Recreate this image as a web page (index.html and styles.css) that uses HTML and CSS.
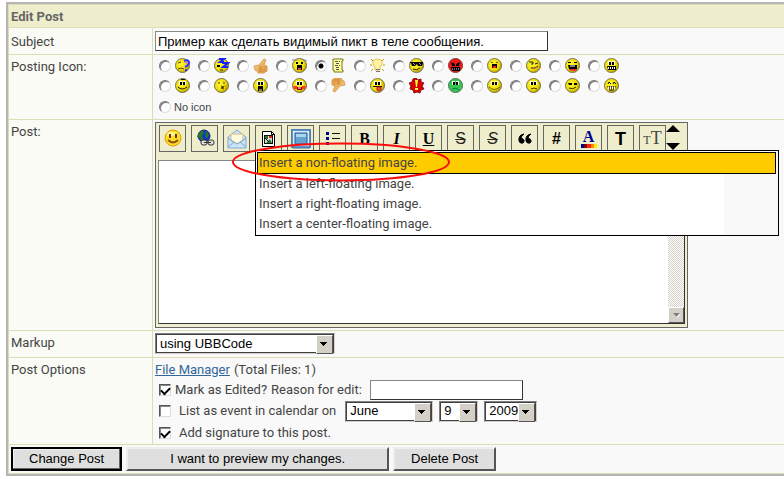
FILE: index.html
```html
<!DOCTYPE html>
<html lang="en">
<head>
<meta charset="utf-8">
<title>Edit Post</title>
<link rel="stylesheet" href="styles.css">
</head>
<body>
<svg class="defs" aria-hidden="true">
  <defs>
    <radialGradient id="yellow" cx=".4" cy=".4" r=".65"><stop offset="0" stop-color="#fff83c"/><stop offset=".65" stop-color="#eedc00"/><stop offset="1" stop-color="#a89300"/></radialGradient>
    <linearGradient id="hand" x2="1" y2="1"><stop offset="0" stop-color="#ffdc90"/><stop offset="1" stop-color="#d98b32"/></linearGradient>
    <g id="face"><circle cx="7.5" cy="7.5" r="7" fill="url(#yellow)" stroke="#777250"/></g>
    <g id="eyes"><path d="M4 3h3v4H4zM8 3h3v4H8z" fill="#fff"/><path d="M5 4h2v3H5zM8 4h2v3H8z"/></g>
    <g id="thumb"><path d="M1 8l5-1 5-6 2 1-2 5 3 1v5l-3 2H5l-1-2-2-1z" fill="url(#hand)" stroke="#d9a45f"/><path d="M6 9h3M6 11h3M6 13h3" stroke="#c98238" fill="none"/></g>
  </defs>
</svg>
<form class="post-form">
  <h1 class="title">Edit Post</h1>

  <div class="row middle">
    <label class="name" for="subject">Subject</label>
    <div class="value"><input class="field subject" id="subject" type="text" value="Пример как сделать видимый пикт в теле сообщения."></div>
  </div>

  <div class="row">
    <div class="name">Posting Icon:</div>
    <div class="value icon-cell">
      <div class="icons">
        <label><input type="radio" name="icon" aria-label="Confused"><svg><use href="#face"/><path d="M3 5l3-1M3 11l3-1 3 1" stroke="#554600" fill="none"/><path d="M9 3q4-2 5 1 0 3-4 5m0 3h2" stroke="#33f" stroke-width="2" fill="none"/><path d="M9 4l4 1" stroke="#c6f"/></svg></label>
        <label><input type="radio" name="icon" aria-label="Sleepy"><svg><use href="#face"/><path d="M5 1h5L6 4h4M8 5h6l-5 4h5" stroke="#12f" stroke-width="2" fill="none"/><path d="M3 7h3v2H3z"/><path d="M6 12h3" stroke="#222"/></svg></label>
        <label><input type="radio" name="icon" aria-label="Thumbs up"><svg><use href="#thumb"/></svg></label>
        <label><input type="radio" name="icon" aria-label="Shocked"><svg><use href="#face"/><path d="M0 2h5M10 1l5 2" stroke="#7788a0"/><path d="M4 4h2v2H4zM9 4h2v2H9zM5 7h5v5H5z"/><path d="M6 10h3v2H6z" fill="#d44"/></svg></label>
        <label><input type="radio" name="icon" aria-label="Note" checked><svg><path d="M2 1h10v2h-1v9h1v2H3v-2H2z" fill="#ffffa0" stroke="#777b13"/><path d="M4 3.500h5M5 5.500h4M4 7.500h5M5 9.500h4M5 11.500h4" stroke="#555" stroke-dasharray="3 1"/></svg></label>
        <label><input type="radio" name="icon" aria-label="Idea"><svg><path d="M1 1l2 2m11-2l-2 2M0 7h2m11 0h2M1 13l2-2m11 2l-2-2" stroke="#b9a100"/><path d="M5 9Q2 6 3 3q4-4 9 0 1 3-2 6v3H5z" fill="#fff5a0" stroke="#e8bd4b"/><path d="M6 11.500h4M6 13.500h4" stroke="#777"/></svg></label>
        <label><input type="radio" name="icon" aria-label="Cool"><svg><use href="#face"/><path d="M1 4h13v1l-1 3H9L8 6 6 8H3L2 5H1z"/><path d="M4 5l2 2m4-2l2 2" stroke="#999"/><path d="M4 11q4 2 7-1" stroke="#222" fill="none"/></svg></label>
        <label><input type="radio" name="icon" aria-label="Mad"><svg><circle cx="7.5" cy="7.5" r="7" fill="#ef1715" stroke="#8b3838"/><path d="M3 4l4 2v2H4zM12 4L8 6v2h3zM3 9h9v4H4z"/><path d="M4 11h8" stroke="#ddd" stroke-dasharray="1 1"/></svg></label>
        <label><input type="radio" name="icon" aria-label="Surprised"><svg><use href="#face"/><path d="M4 4.500h2M9 4.500h2" stroke="#665b00"/><path d="M5 6h5v4H5z"/><path d="M6 8h3v2H6z" fill="#e22"/></svg></label>
        <label><input type="radio" name="icon" aria-label="Wink"><svg><use href="#face"/><path d="M3 4h4v2H5M9 6l3-1M5 10h4l3-2" stroke="#222" fill="none"/><path d="M8 11l4-2" stroke="#f66"/></svg></label>
        <label><input type="radio" name="icon" aria-label="Laugh"><svg><use href="#face"/><path d="M3 4h3v1H3zM9 4h3v1H9zM3 7h9v4q-4 4-8 0z"/><path d="M5 8h5" stroke="#fff"/><path d="M5 11h6v2H6z" fill="#f33"/></svg></label>
        <label><input type="radio" name="icon" aria-label="Grin"><svg><use href="#face"/><use href="#eyes"/><path d="M3 8h9v4H4z"/><path d="M4 10h8" stroke="#fff" stroke-width="2" stroke-dasharray="1 1"/></svg></label>
        <label><input type="radio" name="icon" aria-label="Crazy"><svg><use href="#face"/><use href="#eyes"/><path d="M3 9q4 4 9 0M6 1.500h4" stroke="#111" fill="none"/></svg></label>
        <label><input type="radio" name="icon" aria-label="Kiss"><svg><use href="#face"/><path d="M4 5h2M9 5h2M7 8l3 1-3 1 3 1" stroke="#513c00" fill="none"/><path d="M10 8h4v2h-3" fill="#ffd900" stroke="#b58b00"/></svg></label>
        <label><input type="radio" name="icon" aria-label="Gasp"><svg><use href="#face"/><use href="#eyes"/><path d="M5 8h5v5H5z"/><path d="M6 11h3v2H6z" fill="#777"/></svg></label>
        <label><input type="radio" name="icon" aria-label="Blush"><svg><use href="#face"/><use href="#eyes"/><path d="M1 8h4v3H2zM10 8h4l-1 3h-3z" fill="#ff3c22"/><path d="M5 9h5v3H5z" fill="#900"/><path d="M6 10h3" stroke="#fff"/></svg></label>
        <label><input type="radio" name="icon" aria-label="Thumbs down"><svg><use href="#thumb" transform="matrix(-1 0 0 -1 15 15)"/></svg></label>
        <label><input type="radio" name="icon" aria-label="Tongue"><svg><use href="#face"/><use href="#eyes"/><path d="M3 8.500h9" stroke="#111"/><path d="M7 9h4v3q-2 2-4 0z" fill="#f44" stroke="#a22"/></svg></label>
        <label><input type="radio" name="icon" aria-label="Exclamation"><svg><path d="M7 0l2 2 3-1v3l3 1-2 3 2 3-3 1-1 3-3-1-3 1-1-3-3-1 1-3-2-3 3-1 1-3z" fill="#d90000" stroke="#8d1717"/><path d="M6 2h3l-1 7H7zM6 10h3v2H6z" fill="#ff3"/></svg></label>
        <label><input type="radio" name="icon" aria-label="Sick"><svg><circle cx="7.5" cy="7.5" r="7" fill="#36c653" stroke="#507259"/><use href="#eyes"/><path d="M4 11q4-2 7 1" stroke="#074" fill="none"/></svg></label>
        <label><input type="radio" name="icon" aria-label="Pleased"><svg><use href="#face"/><use href="#eyes"/><path d="M2 9q5 5 11 0" stroke="#6e5d00" fill="none"/></svg></label>
        <label><input type="radio" name="icon" aria-label="Sad"><svg><use href="#face"/><use href="#eyes"/><path d="M5 11q3-2 6 0" stroke="#4c3b00" fill="none"/></svg></label>
        <label><input type="radio" name="icon" aria-label="Smirk"><svg><use href="#face"/><path d="M3 5h4v2H4zM9 5h3v2H9z"/><path d="M4 10q4 2 7-1" stroke="#332d00" fill="none"/></svg></label>
        <label><input type="radio" name="icon" aria-label="Smile"><svg><use href="#face"/><path d="M4 6l1-2 2 2m2 0l1-2 2 2" stroke="#111" fill="none"/><path d="M3 8h9l-1 3-2 2H6l-2-2z" fill="#594b00"/><path d="M4 10h7" stroke="#fff" stroke-width="3" stroke-dasharray="1 1"/></svg></label>
      </div>
      <label class="no-icon"><input type="radio" name="icon">No icon</label>
    </div>
  </div>

  <div class="row">
    <label class="name" for="body">Post:</label>
    <div class="value">
      <div class="editor">
        <div class="toolbar">
          <button type="button" aria-label="Smileys"><svg viewBox="0 0 20 20"><circle cx="10" cy="9" r="8" fill="#ffdf26" stroke="#e39b10"/><ellipse cx="8" cy="5" rx="4" ry="2" fill="#fff59c"/><path d="M6 5h2v4H6zM12 5h2v4h-2z" fill="#68320c"/><path d="M5 11q5 5 10 0" stroke="#94520c" fill="none" stroke-width="2"/></svg></button>
          <button type="button" aria-label="Link"><svg viewBox="0 0 20 20"><circle cx="9" cy="7" r="6" fill="#1730ce" stroke="#17285d"/><path d="M4 4l4-3 1 3-2 3 2 4-2 2-2-4-3-1zM11 2l3 3-2 5-2-3z" fill="#237929"/><rect x="6" y="11" width="6" height="5" rx="2" fill="#ddd" stroke="#333"/><rect x="13" y="11" width="6" height="5" rx="2" fill="#ddd" stroke="#333"/><path d="M9 13.500h7" stroke="#333"/></svg></button>
          <button type="button" aria-label="E-mail"><svg viewBox="0 0 20 20"><path d="M1 8l9-7 9 7v11H1z" fill="#cce4fa" stroke="#82a8d3"/><path d="M4 5h12v7l-6 3-6-3z" fill="#fff9dd" stroke="#d7bd83"/><path d="M1 9l9 6 9-6M1 18l6-5m12 5l-6-5" fill="none" stroke="#78a5d5"/></svg></button>
          <button type="button" aria-label="Image" aria-expanded="true"><svg viewBox="0 0 20 20"><path d="M3.500 2.500h9l3 3v12h-12z" fill="#fff" stroke="#000"/><path d="M12.500 2.500v3h3" fill="none" stroke="#000"/><rect x="5.500" y="6.500" width="8" height="8" fill="#ddd" stroke="#111"/><path d="M6 7h3v3H6zM7 14l4-4 2 4z" fill="#208028"/><path d="M10 7h3v2h-3z" fill="#d22"/><path d="M6 9l4 4" stroke="#111"/></svg></button>
          <button type="button" aria-label="Media"><svg viewBox="0 0 20 20"><rect x="0" y="0" width="20" height="19" rx="2" fill="#5f94c8" stroke="#426d9b"/><path d="M2 2h16v15H2z" fill="#d7ecfa"/><path d="M4 4h12v11H4z" fill="#66a3d2" stroke="#315f90"/><path d="M5 5h10v3H5z" fill="#a9d5ee"/></svg></button>
          <button type="button" aria-label="List"><svg viewBox="0 0 20 20"><path d="M3 3h3v3H3zM3 8h3v3H3zM3 13h3v3H3z" fill="#00008b"/><path d="M9 4.500h8M9 9.500h8M9 14.500h8" stroke="#111"/></svg></button>
          <button type="button" class="serif">B</button>
          <button type="button" class="serif italic">I</button>
          <button type="button" class="serif underline">U</button>
          <button type="button" class="strike">S</button>
          <button type="button" class="strike italic">S</button>
          <button type="button" aria-label="Quote"><svg viewBox="0 0 20 20"><path d="M9 5Q3 6 4 12q1 3 4 2 3-3-2-5 0-2 3-4zM16 5q-6 1-5 7 1 3 4 2 3-3-2-5 0-2 3-4z" stroke="#000"/></svg></button>
          <button type="button" class="hash">#</button>
          <button type="button" aria-label="Font color" class="color">A</button>
          <button type="button" class="font">T</button>
          <button type="button" class="size" aria-label="Font size"><small>T</small>T</button>
          <span class="resize"><button type="button" aria-label="Shrink editor"><svg viewBox="0 0 14 8"><path d="M7 0l7 7H0z"/></svg></button><button type="button" aria-label="Enlarge editor"><svg viewBox="0 0 14 8"><path d="M7 8L0 1h14z"/></svg></button></span>
        </div>
        <div class="text-box">
          <textarea id="body"></textarea>
          <div class="scroll"><button type="button" class="arrow" aria-label="Scroll down"><svg viewBox="0 0 9 6"><path d="M2 2h7L5 6z" fill="#fff"/><path d="M1 1h7L4.500 5z" fill="#808080"/></svg></button></div>
        </div>
        <div class="menu">
          <button type="button" class="current">Insert a non-floating image.</button>
          <div class="rest">
            <button type="button">Insert a left-floating image.</button>
            <button type="button">Insert a right-floating image.</button>
            <button type="button">Insert a center-floating image.</button>
          </div>
        </div>
        <svg class="ring" viewBox="0 0 220 40"><ellipse cx="110" cy="20" rx="108" ry="18.500" fill="none" stroke="#f80c0c" stroke-width="2"/></svg>
      </div>
    </div>
  </div>

  <div class="row">
    <label class="name" for="markup">Markup</label>
    <div class="value"><span class="select markup"><select id="markup"><option>using UBBCode</option></select></span></div>
  </div>

  <div class="row">
    <div class="name">Post Options</div>
    <div class="value options">
      <div class="line"><a href="#files">File Manager</a> (Total Files: 1)</div>
      <div class="line"><input type="checkbox" id="edited" checked><label for="edited">Mark as Edited?</label> <label for="reason">Reason for edit:</label><input class="field reason" id="reason" type="text"></div>
      <div class="line wide"><input type="checkbox" id="event"><label for="event">List as event in calendar on</label>
        <span class="select month"><select aria-label="Month"><option>June</option></select></span>
        <span class="select day"><select aria-label="Day"><option>9</option></select></span>
        <span class="select year"><select aria-label="Year"><option>2009</option></select></span>
      </div>
      <div class="line wide"><input type="checkbox" id="signature" checked><label for="signature">Add signature to this post.</label></div>
    </div>
  </div>

  <div class="actions">
    <button type="submit" class="primary">Change Post</button>
    <button type="button" class="preview">I want to preview my changes.</button>
    <button type="button">Delete Post</button>
  </div>
</form>
</body>
</html>
```
FILE: styles.css
```css
* { box-sizing: border-box; }
body {
  margin: 0;
  padding: 2px 0 0 6px;
  overflow: hidden;
  background: #fff;
  color: #444;
  font: 13px/20px Roboto, sans-serif;
}
button, input, select, textarea { margin: 0; font: 13px/16px "Liberation Sans", sans-serif; color: #000; }
.defs { position: absolute; width: 0; height: 0; }
.post-form {
  border: 2px solid #b5b5b5;
  border-right: 0;
  background: #f9f9f9;
  box-shadow: inset 1px 1px #ddddb5, inset 0 -1px #ddddb5;
  padding: 1px 0 1px 1px;
}
.title { margin: 0; height: 22px; padding: 0 2px; background: #eeeecc; color: #666; font-size: 13px; line-height: 24px; }
.row { display: grid; grid-template-columns: 144px 1fr; border-top: 1px solid #ddddb5; }
.name { padding: 2px; background: #fafbf5; border-right: 1px solid #ddddb5; }
.middle .name { padding-top: 4px; }
.value { padding: 2px; min-width: 0; }
.field { display: block; height: 20px; padding: 0 2px; border: 1px solid #333; border-top-color: #888; border-left-color: #888; border-radius: 0; background: #fff; }
.subject { width: 393px; margin: 1px 0; }

input[type="radio"] { appearance: none; flex: none; width: 12px; height: 12px; border: 1px solid; border-color: #777 #ddd #ddd #777; border-radius: 50%; background: #fff; box-shadow: inset 1px 1px #777; }
input[type="radio"]:checked { background: radial-gradient(circle, #000 2px, #fff 3px); }
.icon-cell { padding-top: 1px; }
.icons { display: grid; grid-template-columns: repeat(12, 39px); padding-left: 4px; }
.icons label { display: flex; align-items: center; gap: 4px; height: 20px; }
.icons svg { width: 16px; height: 16px; }
.no-icon { display: flex; align-items: center; gap: 3px; height: 21px; padding-left: 4px; font: 11px "Liberation Sans", sans-serif; }

.editor { position: relative; width: 533px; border: 1px solid #666; background: #eeeecc; padding: 2px; }
.toolbar { display: flex; gap: 5px; height: 35px; padding-left: 1px; }
.toolbar button { flex: none; display: flex; align-items: center; justify-content: center; width: 27px; height: 27px; padding: 0; border: 1px solid #666; background: #eeeecc; font-size: 16px; font-weight: bold; }
.toolbar svg { width: 20px; height: 20px; }
.toolbar .serif { font-family: "Liberation Serif", serif; }
.toolbar .strike { font: 16px "Liberation Sans", sans-serif; text-decoration: line-through 1px; color: #222; }
.toolbar .italic { font-style: italic; }
.toolbar .underline { text-decoration: underline; }
.toolbar .color { flex-direction: column; font: bold 16px/14px "Liberation Serif", serif; color: #00008b; }
.color::after { content: ""; width: 16px; height: 4px; background: linear-gradient(90deg, #00008b 0 3px, #800 3px 6px, #f20 6px 10px, #f80 10px 13px, #fe0 13px); }
.toolbar .font { font-size: 18px; }
.toolbar .size { align-items: baseline; font: 18px/24px "Liberation Serif", serif; color: #444; }
.size small { font-size: 12px; }
.resize { display: flex; flex-direction: column; justify-content: space-between; height: 25px; margin-left: -5px; }
.toolbar .resize button { width: 14px; height: 8px; border: 0; }
.toolbar .resize svg { width: 14px; height: 8px; }
.text-box { display: flex; height: 164px; margin-bottom: 1px; border: 1px solid #333; border-top-color: #888; border-left-color: #888; background: #fff; }
textarea { flex: 1; resize: none; border: 0; outline: 0; padding: 2px; }
.scroll { display: flex; align-items: flex-end; width: 16px; background: repeating-conic-gradient(#d4d0c8 0 25%, #fff 0 50%) 0 0 / 2px 2px; }
.arrow { display: flex; align-items: center; justify-content: center; width: 16px; height: 16px; padding: 0; border: 1px solid; border-color: #fff #555 #555 #fff; background: #d4d0c8; }
.arrow svg { width: 9px; height: 6px; }
.menu { position: absolute; left: 99px; top: 27px; width: 524px; height: 86px; padding: 1px; border: 1px solid #000; background: #f9f9f9; }
.menu button { display: block; width: 100%; height: 20px; padding: 0 2px; border: 0; background: none; text-align: left; color: #444; font: 13px/20px Roboto, sans-serif; }
.menu .current { width: 519px; height: 22px; padding: 0 1px; border: 1px solid #000; background: #fc0; }
.menu .rest { width: 467px; background: #fff; }
.ring { position: absolute; left: 75px; top: 19px; width: 220px; height: 40px; pointer-events: none; }

.select { position: relative; display: block; height: 21px; border: 1px solid; border-color: #808080 #d4d0c8 #d4d0c8 #808080; background: #fff; }
.select select { display: block; appearance: none; width: 100%; height: 19px; padding: 0 0 0 3px; border: 1px solid #404040; border-radius: 0; background: #fff; }
.select::after { content: ""; position: absolute; right: 1px; top: 1px; width: 15px; height: 17px; border: 1px solid; border-color: #fff #555 #555 #fff; background: linear-gradient(#000, #000) 3px 6px / 7px 1px no-repeat, linear-gradient(#000, #000) 4px 7px / 5px 1px no-repeat, linear-gradient(#000, #000) 5px 8px / 3px 1px no-repeat, linear-gradient(#000, #000) 6px 9px / 1px 1px no-repeat, #d4d0c8; pointer-events: none; }
.markup { width: 180px; margin-bottom: 1px; }
.month { width: 88px; margin-left: 3px; }
.day { width: 39px; }
.year { width: 53px; }

a { color: #369; text-decoration: underline; }
.options { padding-bottom: 1px; }
.line { display: flex; align-items: center; gap: 4px; height: 20px; }
.line.wide { gap: 6px; height: 22px; }
.wide label { margin-left: 2px; }
.line:last-child { height: 21px; }
input[type="checkbox"] { appearance: none; flex: none; width: 12px; height: 12px; margin-left: 4px; border: 1px solid; border-color: #555 #ddd #ddd #555; background: #fff; box-shadow: inset 1px 1px #888; }
input[type="checkbox"]:checked::after { content: ""; display: block; width: 7px; height: 4px; margin: 2px 1px; border: solid #000; border-width: 0 0 2px 2px; transform: rotate(-45deg); }
.reason { width: 153px; margin-left: 4px; }

.actions { display: flex; gap: 4px; height: 29px; padding: 2px; border-top: 1px solid #ddddb5; }
.actions button { height: 24px; padding: 0 16px; border: 2px solid; border-color: #eee #555 #555 #eee; background: #dedfde; }
.actions .primary { border-color: #000; box-shadow: inset -1px -1px #666, inset 1px 1px #eee; }
.actions .preview { padding: 0 42px; }
```
